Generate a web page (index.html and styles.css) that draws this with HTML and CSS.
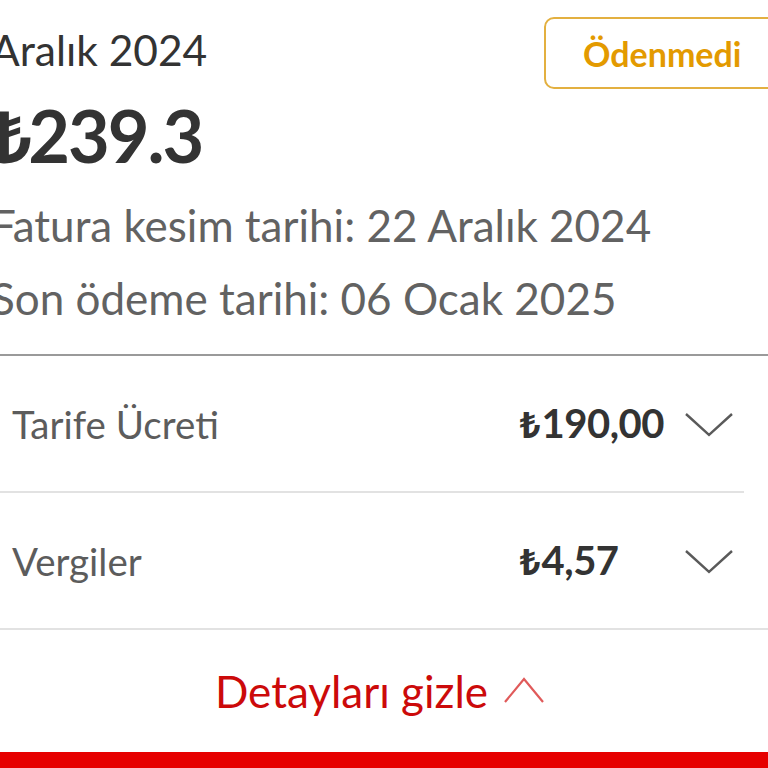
FILE: index.html
```html
<!DOCTYPE html>
<html lang="tr">
<head>
<meta charset="utf-8">
<link rel="stylesheet" href="styles.css">
</head>
<body>
<div class="page">
  <section class="summary">
    <div class="summary-top">
      <div class="summary-main">
        <div class="period">Aralık 2024</div>
        <div class="total"><span class="lira">₺</span>239.3</div>
      </div>
      <div class="badge">Ödenmedi</div>
    </div>
    <div class="date-line">Fatura kesim tarihi: 22 Aralık 2024</div>
    <div class="date-line second">Son ödeme tarihi: 06 Ocak 2025</div>
  </section>
  <div class="rule"></div>
  <div class="row first">
    <span class="label">Tarife Ücreti</span>
    <span class="amount"><span class="lira">₺</span>190,00</span>
    <svg class="chev" viewBox="0 0 50 26" width="50" height="26"><path d="M2 3 L25 24 L48 3" fill="none" stroke="#5a5a5a" stroke-width="2.4"/></svg>
  </div>
  <div class="row last">
    <span class="label">Vergiler</span>
    <span class="amount"><span class="lira">₺</span>4,57</span>
    <svg class="chev" viewBox="0 0 50 26" width="50" height="26"><path d="M2 3 L25 24 L48 3" fill="none" stroke="#5a5a5a" stroke-width="2.4"/></svg>
  </div>
  <div class="toggle">
    <span class="toggle-text">Detayları gizle</span>
    <svg class="chev-up" viewBox="0 0 42 28" width="42" height="28"><path d="M2 26 L21 3 L40 26" fill="none" stroke="#e05a5a" stroke-width="2.2"/></svg>
  </div>
  <div class="redbar"></div>
</div>
</body>
</html>
```
FILE: styles.css
```css
html, body {
  margin: 0;
  padding: 0;
  background: #ffffff;
  overflow: hidden;
}
.page {
  width: 768px;
  height: 768px;
  overflow: hidden;
  font-family: Lato, "Noto Sans", "DejaVu Sans", sans-serif;
  display: flex;
  flex-direction: column;
}
.lira {
  font-family: "Noto Sans", "DejaVu Sans", sans-serif;
  letter-spacing: 0;
}
.summary {
  margin-left: -9px;
  padding-top: 22px;
  padding-bottom: 28px;
}
.summary-top {
  display: flex;
  justify-content: space-between;
  align-items: flex-start;
}
.period {
  font-size: 42.5px;
  line-height: 56px;
  color: #333333;
}
.total {
  margin-top: 17px;
  font-size: 72px;
  line-height: 80px;
  font-weight: 700;
  color: #333333;
  letter-spacing: -2px;
}
.total .lira {
  margin-right: -4px;
}
.badge {
  margin-top: -5px;
  margin-right: -12px;
  width: 236px;
  height: 72px;
  box-sizing: border-box;
  border: 2px solid #e3b040;
  border-radius: 10px;
  padding-left: 37px;
  display: flex;
  align-items: center;
  font-size: 34px;
  font-weight: 700;
  color: #e39a00;
}
.date-line {
  margin-top: 22px;
  font-size: 44px;
  line-height: 56px;
  color: #626262;
}
.date-line.second {
  margin-top: 17px;
}
.rule {
  height: 2px;
  background: #9a9a9a;
}
.row {
  height: 135px;
  display: grid;
  grid-template-columns: 508px 164px 50px;
  align-items: center;
  padding-left: 12px;
  border-bottom: 2px solid #e2e2e2;
}
.row.first {
  margin-right: 24px;
}
.label {
  font-size: 38.5px;
  color: #5c5c5c;
}
.amount {
  font-size: 40px;
  font-weight: 700;
  color: #333333;
  letter-spacing: -0.5px;
}
.amount .lira {
  font-size: 36px;
  margin-right: 1px;
}
.chev {
  display: block;
}
.toggle {
  height: 122px;
  display: flex;
  align-items: center;
  justify-content: center;
  gap: 15px;
  padding-right: 8px;
}
.toggle-text {
  font-size: 44px;
  color: #cc0a0a;
}
.chev-up {
  display: block;
  margin-top: -2px;
}
.redbar {
  height: 16px;
  background: #e60000;
}
```
